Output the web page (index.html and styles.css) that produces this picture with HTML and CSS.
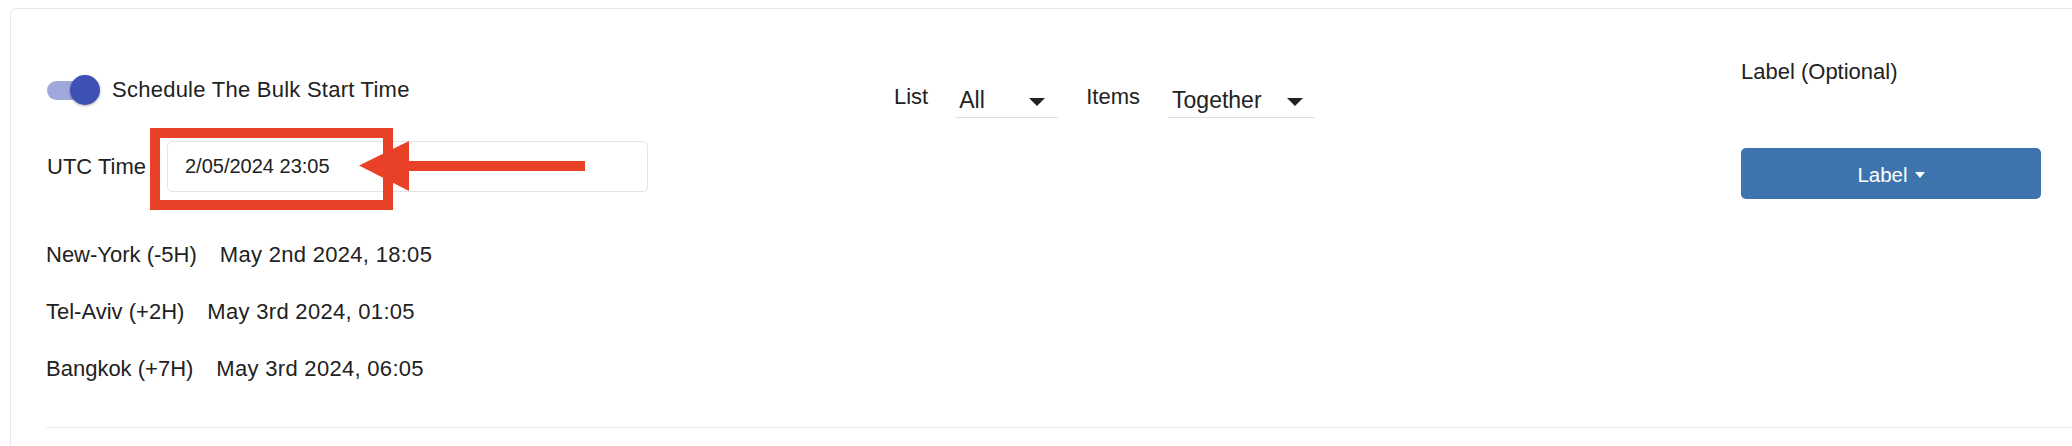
FILE: index.html
```html
<!DOCTYPE html>
<html lang="en">
<head>
<meta charset="utf-8">
<title>Schedule Bulk</title>
<link rel="stylesheet" href="styles.css">
</head>
<body>
<div class="card">
  <div class="columns">
    <div class="col-left">
      <div class="toggle-row">
        <span class="switch"><span class="track"></span><span class="knob"></span></span>
        <span class="toggle-label">Schedule The Bulk Start Time</span>
      </div>
      <div class="utc-row">
        <span class="utc-label">UTC Time</span>
        <div class="input-wrap">
          <input class="utc-input" type="text" value="2/05/2024 23:05">
          <div class="highlight-box"></div>
          <svg class="arrow" width="226" height="51" viewBox="0 0 226 51">
            <polygon points="0,24.5 50,0 50,50" fill="#e84128"/>
            <rect x="49" y="20" width="177" height="10" fill="#e84128"/>
          </svg>
        </div>
      </div>
      <div class="zones">
        <div class="zone"><span class="zone-name">New-York (-5H)</span><span class="zone-date">May 2nd 2024, 18:05</span></div>
        <div class="zone"><span class="zone-name">Tel-Aviv (+2H)</span><span class="zone-date">May 3rd 2024, 01:05</span></div>
        <div class="zone"><span class="zone-name">Bangkok (+7H)</span><span class="zone-date">May 3rd 2024, 06:05</span></div>
      </div>
    </div>
    <div class="col-mid">
      <span class="field-label">List</span>
      <div class="dropdown dd-list"><span>All</span><span class="tri"></span></div>
      <span class="field-label">Items</span>
      <div class="dropdown dd-items"><span>Together</span><span class="tri"></span></div>
    </div>
    <div class="col-right">
      <div class="opt-label">Label (Optional)</div>
      <button class="label-btn" type="button"><span>Label</span><span class="caret"></span></button>
    </div>
  </div>
  <div class="separator"></div>
</div>
</body>
</html>
```
FILE: styles.css
```css
html, body {
  margin: 0;
  padding: 0;
  background: #ffffff;
  overflow: hidden;
}
body {
  font-family: "Liberation Sans", Arial, sans-serif;
  color: #222222;
  font-size: 22px;
  line-height: 26px;
}
.card {
  margin: 8px 0 0 10px;
  width: 2120px;
  height: 460px;
  border: 1px solid #e3e8ef;
  border-radius: 6px;
  background: #ffffff;
  padding-top: 50px;
  box-sizing: border-box;
}
.columns {
  display: flex;
  align-items: flex-start;
  padding-left: 35px;
}
.col-left {
  width: 848px;
}
.toggle-row {
  margin-top: 16px;
  display: flex;
  align-items: center;
  height: 30px;
}
.switch {
  position: relative;
  width: 54px;
  height: 30px;
  flex: none;
  margin-left: 1px;
}
.track {
  position: absolute;
  left: 0;
  top: 6px;
  width: 50px;
  height: 19px;
  border-radius: 10px;
  background: #9fa8da;
}
.knob {
  position: absolute;
  left: 23px;
  top: 0;
  width: 30px;
  height: 30px;
  border-radius: 50%;
  background: #3f51b5;
  box-shadow: 0 1px 3px rgba(0, 0, 0, 0.3);
}
.toggle-label {
  margin-left: 11px;
  letter-spacing: 0.25px;
}
.utc-row {
  margin-top: 36px;
  display: flex;
  align-items: center;
  height: 51px;
}
.utc-label {
  margin-left: 1px;
  width: 120px;
}
.input-wrap {
  position: relative;
  width: 481px;
  height: 51px;
}
.utc-input {
  box-sizing: border-box;
  width: 481px;
  height: 51px;
  border: 1px solid #e1e4ea;
  border-radius: 5px;
  padding: 0 0 0 17px;
  margin: 0;
  font-family: "Liberation Sans", Arial, sans-serif;
  font-size: 20px;
  color: #222222;
  background: #ffffff;
  outline: none;
}
.highlight-box {
  position: absolute;
  left: -17px;
  top: -13px;
  width: 243px;
  height: 82px;
  box-sizing: border-box;
  border: 10px solid #e84128;
}
.arrow {
  position: absolute;
  left: 192px;
  top: 0;
}
.zones {
  margin-top: 50px;
}
.zone {
  display: flex;
  height: 26px;
  margin-bottom: 31px;
}
.zone:last-child {
  margin-bottom: 0;
}
.zone-name {
  margin-right: 23px;
}
.zone-date {
  letter-spacing: 0.3px;
}
.col-mid {
  width: 847px;
  margin-top: 25px;
  display: flex;
  align-items: flex-start;
}
.field-label {
  margin-right: 28px;
}
.dropdown {
  margin-top: 3px;
  margin-right: 28px;
  box-sizing: border-box;
  height: 31px;
  padding: 0 0 4px 3px;
  border-bottom: 1px solid #dddddd;
  display: flex;
  align-items: center;
  justify-content: space-between;
  font-size: 23px;
  line-height: 26px;
}
.dd-list {
  width: 102px;
  padding-right: 13px;
}
.dd-items {
  width: 147px;
  padding-left: 4px;
  padding-right: 12px;
}
.tri {
  width: 0;
  height: 0;
  border-left: 8px solid transparent;
  border-right: 8px solid transparent;
  border-top: 8px solid #222222;
  margin-top: 4px;
}
.col-right {
  width: 300px;
}
.opt-label {
  height: 26px;
}
.label-btn {
  margin-top: 63px;
  width: 300px;
  height: 51px;
  border: none;
  border-radius: 5px;
  background: #3d74ad;
  color: #ffffff;
  font-family: "Liberation Sans", Arial, sans-serif;
  font-size: 20.5px;
  display: flex;
  align-items: center;
  justify-content: center;
  padding: 3px 0 0 0;
}
.caret {
  width: 0;
  height: 0;
  border-left: 5.5px solid transparent;
  border-right: 5.5px solid transparent;
  border-top: 6px solid #ffffff;
  margin-left: 7px;
  margin-top: -1px;
}
.separator {
  margin: 45px 0 0 35px;
  height: 1px;
  background: #e8ebef;
}
```
